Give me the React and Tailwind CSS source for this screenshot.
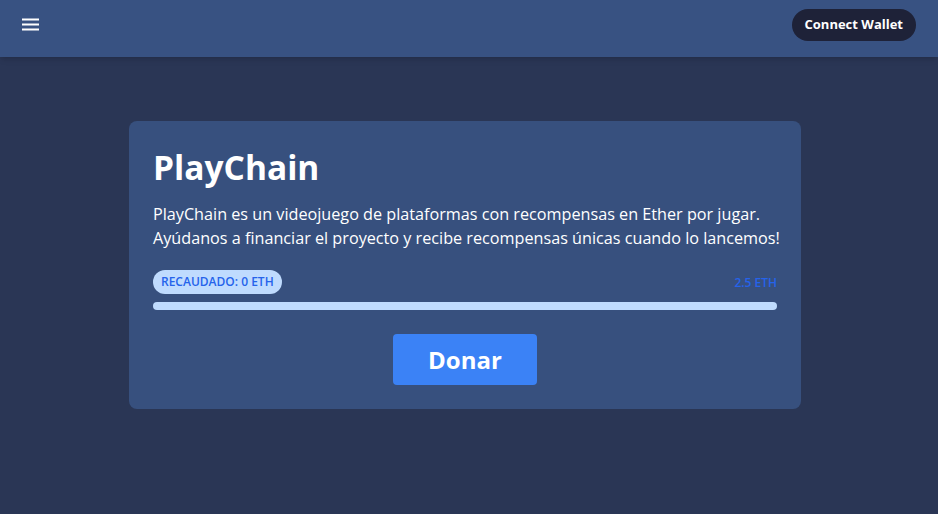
export default function App() {
  return (
    <div className="min-h-[514px] bg-[#2a3655] flex flex-col" style={{ fontFamily: '"Open Sans", "Noto Sans", sans-serif' }}>
      <header className="h-[57px] bg-[#385282] flex items-start justify-between pl-[22px] pr-[22px] shadow-md">
        <div className="h-[50px] flex items-center">
          <svg width="18" height="14" viewBox="0 0 18 14">
            <rect x="0" y="0.5" width="17" height="2" fill="white" />
            <rect x="0" y="5.5" width="17" height="2" fill="white" />
            <rect x="0" y="10.5" width="17" height="2" fill="white" />
          </svg>
        </div>
        <div className="h-[50px] flex items-center">
          <button className="bg-[#1e2238] text-white text-[13px] font-bold rounded-full px-[13px] h-[32px]">
            Connect Wallet
          </button>
        </div>
      </header>
      <main className="flex justify-center pt-[64px] pr-[8px]">
        <div className="w-[672px] bg-[#37507e] rounded-lg px-6 pt-[22px] pb-6">
          <h1 className="text-white text-[33.5px] font-bold leading-[48px]">PlayChain</h1>
          <p className="text-white text-[16.2px] leading-[24px] mt-[11px] whitespace-nowrap">
            PlayChain es un videojuego de plataformas con recompensas en Ether por jugar.
            <br />
            Ayúdanos a financiar el proyecto y recibe recompensas únicas cuando lo lancemos!
          </p>
          <div className="mt-[20px]">
            <div className="flex items-center justify-between mb-2">
              <span className="bg-[#bfdbfe] text-[#2563eb] text-xs font-semibold rounded-full px-2 py-1 uppercase">
                Recaudado: 0 ETH
              </span>
              <span className="text-[#2563eb] text-xs font-semibold mt-[2px]">2.5 ETH</span>
            </div>
            <div className="h-2 rounded-full bg-[#bfdbfe]" />
          </div>
          <div className="flex justify-center mt-6">
            <button className="bg-[#3b82f6] text-white text-2xl font-bold rounded w-[144px] h-[51px]">
              Donar
            </button>
          </div>
        </div>
      </main>
    </div>
  );
}
